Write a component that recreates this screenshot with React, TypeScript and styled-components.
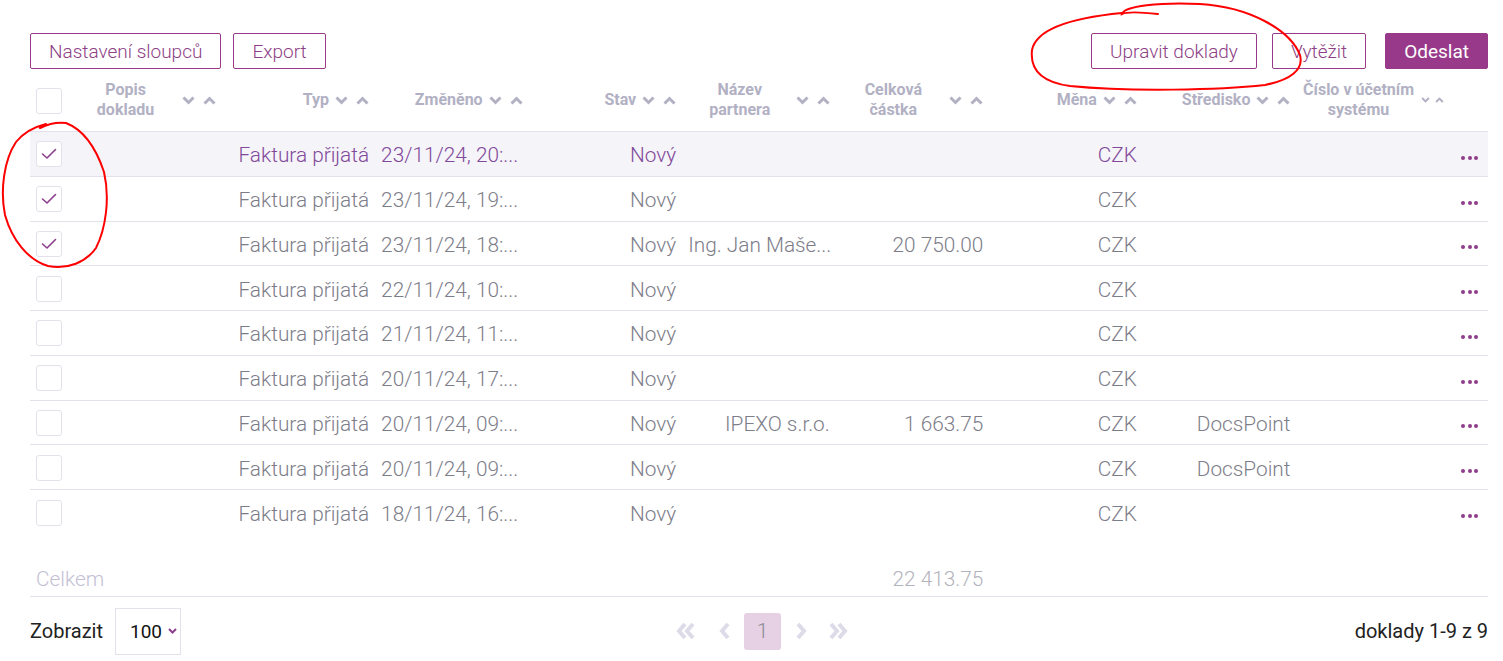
import React from 'react'
import styled, { createGlobalStyle } from 'styled-components'

const PURPLE = '#983a89'
const LINE = '#e3e1eb'
const HEAD = '#b2b1c4'

const GlobalStyle = createGlobalStyle`
  html, body {
    margin: 0;
    padding: 0;
    background: #fff;
  }
  body {
    font-family: Roboto, 'Liberation Sans', sans-serif;
  }
`

const Page = styled.div`
  position: relative;
  width: 1503px;
  height: 661px;
  box-sizing: border-box;
  padding: 33px 15px 0 30px;
  overflow: hidden;
`

const Toolbar = styled.div`
  display: flex;
  align-items: center;
  height: 36px;
`

const ButtonGroup = styled.div<{ $gap: number }>`
  display: flex;
  gap: ${(p) => p.$gap}px;
`

const Spacer = styled.div`
  flex: 1;
`

const Button = styled.button<{ $primary?: boolean }>`
  height: 36px;
  box-sizing: border-box;
  padding: 0 18px;
  border: 1px solid ${PURPLE};
  border-radius: 2px;
  background: ${(p) => (p.$primary ? PURPLE : '#fff')};
  color: ${(p) => (p.$primary ? '#fff' : '#8d4085')};
  font-family: Roboto, sans-serif;
  font-size: 19px;
  font-weight: ${(p) => (p.$primary ? 400 : 300)};
  cursor: pointer;
`

const GRID = '34px repeat(9, minmax(0, 1fr)) 42px'

const HeaderRow = styled.div`
  display: grid;
  grid-template-columns: ${GRID};
  height: 63px;
  box-sizing: border-box;
  align-items: center;
  border-bottom: 1px solid ${LINE};
`

const HeadCell = styled.div`
  display: flex;
  align-items: center;
  justify-content: flex-end;
  padding: 0 2px 0 10px;
  min-width: 0;
  color: ${HEAD};
  font-size: 16px;
  font-weight: 700;
  line-height: 20px;
`

const HeadLabel = styled.span<{ $wide?: boolean }>`
  min-width: ${(p) => (p.$wide ? '100px' : '0')};
  flex-shrink: 0;
  text-align: center;
  white-space: nowrap;
`

const SortIcons = styled.span<{ $small?: boolean }>`
  display: flex;
  align-items: center;
  gap: ${(p) => (p.$small ? 5 : 8)}px;
  margin-left: ${(p) => (p.$small ? 7 : 6)}px;

  svg {
    width: ${(p) => (p.$small ? 9 : 13)}px;
    height: ${(p) => (p.$small ? 6 : 9)}px;
  }
`

const Row = styled.div<{ $selected?: boolean; $last?: boolean }>`
  display: grid;
  grid-template-columns: ${GRID};
  height: 44.75px;
  box-sizing: border-box;
  align-items: center;
  background: ${(p) => (p.$selected ? '#f4f4f9' : '#fff')};
  border-bottom: ${(p) => (p.$last ? 'none' : `1px solid ${LINE}`)};
  color: ${(p) => (p.$selected ? '#82489a' : '#7d7d89')};
`

const Cell = styled.div<{ $left?: boolean }>`
  padding: 3px 2px 0 10px;
  min-width: 0;
  font-size: 20.8px;
  font-weight: 300;
  line-height: 24px;
  white-space: nowrap;
  overflow: hidden;
  text-align: ${(p) => (p.$left ? 'left' : 'right')};
`

const CheckCell = styled.div`
  display: flex;
  align-items: center;
  padding: 1px 0 0 6px;
`

const Box = styled.span`
  display: flex;
  align-items: center;
  justify-content: center;
  width: 26px;
  height: 26px;
  box-sizing: border-box;
  border: 1px solid ${LINE};
  border-radius: 3px;
  background: #fff;
`

const ActionCell = styled.div`
  display: flex;
  justify-content: flex-end;
  gap: 2.5px;
  padding: 8px 10px 0 0;
`

const Dot = styled.span`
  width: 4px;
  height: 4px;
  border-radius: 50%;
  background: #8f3c8a;
`

const TotalRow = styled.div`
  display: grid;
  grid-template-columns: ${GRID};
  height: 62px;
  box-sizing: border-box;
  align-items: end;
  padding-bottom: 6px;
  border-bottom: 1px solid ${LINE};
  font-size: 20.8px;
  font-weight: 300;
  line-height: 22px;
`

const TotalLabel = styled.div`
  grid-column: 1 / span 3;
  padding-left: 6px;
  color: #c4c0d4;
`

const TotalAmount = styled.div`
  grid-column: 7;
  padding-right: 2px;
  text-align: right;
  color: #b3b3bd;
`

const Footer = styled.div`
  display: grid;
  grid-template-columns: 1fr auto 1fr;
  align-items: center;
  padding-top: 11px;
  font-size: 20px;
  color: #222;
`

const ShowBox = styled.div`
  display: flex;
  align-items: center;
  gap: 12px;
`

const Select = styled.div`
  display: flex;
  align-items: center;
  gap: 6px;
  width: 66px;
  height: 47px;
  box-sizing: border-box;
  padding-left: 14px;
  border: 1px solid ${LINE};
  font-size: 19px;
  color: #111;
`

const Pager = styled.div`
  display: flex;
  align-items: center;
  gap: 1px;
  margin-left: 7px;
`

const PageNav = styled.span`
  display: flex;
  align-items: center;
  justify-content: center;
  width: 37px;
  height: 37px;
`

const PageCurrent = styled.span`
  display: flex;
  align-items: center;
  justify-content: center;
  width: 37px;
  height: 37px;
  border-radius: 3px;
  background: #e6d0e4;
  color: #8c8c98;
  font-size: 21px;
  font-weight: 300;
`

const Count = styled.div`
  text-align: right;
`

const Scribble = styled.svg`
  position: absolute;
  top: 0;
  left: 0;
  pointer-events: none;
`

const Down = () => (
  <svg viewBox="0 0 13 9" fill="none">
    <path d="M1.5 1.5 L6.5 6.5 L11.5 1.5" stroke="currentColor" strokeWidth="3" />
  </svg>
)

const Up = () => (
  <svg viewBox="0 0 13 9" fill="none">
    <path d="M1.5 7.5 L6.5 2.5 L11.5 7.5" stroke="currentColor" strokeWidth="3" />
  </svg>
)

const Check = () => (
  <svg width="16" height="12" viewBox="0 0 16 12" fill="none">
    <path d="M1.5 6 L6 10 L14.5 1.5" stroke="#8b3f8c" strokeWidth="1.6" strokeLinecap="round" strokeLinejoin="round" />
  </svg>
)

const Chevron = ({ dir, double }: { dir: 'l' | 'r'; double?: boolean }) => {
  const one = dir === 'l' ? 'M9 2 L3 9 L9 16' : 'M3 2 L9 9 L3 16'
  const two = dir === 'l' ? 'M17 2 L11 9 L17 16' : 'M11 2 L17 9 L11 16'
  return (
    <svg width={double ? 21 : 12} height="18" viewBox={double ? '0 0 21 18' : '0 0 12 18'} fill="none">
      <path d={one} stroke="#dedbe9" strokeWidth="4" />
      {double && <path d={two} stroke="#dedbe9" strokeWidth="4" />}
    </svg>
  )
}

type Column = { label: React.ReactNode; wide?: boolean; small?: boolean }

const columns: Column[] = [
  { label: <>Popis<br />dokladu</>, wide: true },
  { label: 'Typ' },
  { label: 'Změněno' },
  { label: 'Stav' },
  { label: <>Název<br />partnera</>, wide: true },
  { label: <>Celková<br />částka</>, wide: true },
  { label: 'Měna' },
  { label: 'Středisko' },
  { label: <>Číslo v účetním<br />systému</>, wide: true, small: true },
]

type Doc = {
  date: string
  partner?: string
  amount?: string
  centre?: string
  selected?: boolean
}

const docs: Doc[] = [
  { date: '23/11/24, 20:...', selected: true },
  { date: '23/11/24, 19:...', selected: true },
  { date: '23/11/24, 18:...', selected: true, partner: 'Ing. Jan Maše...', amount: '20 750.00' },
  { date: '22/11/24, 10:...' },
  { date: '21/11/24, 11:...' },
  { date: '20/11/24, 17:...' },
  { date: '20/11/24, 09:...', partner: 'IPEXO s.r.o.', amount: '1 663.75', centre: 'DocsPoint' },
  { date: '20/11/24, 09:...', centre: 'DocsPoint' },
  { date: '18/11/24, 16:...' },
]

export default function App() {
  return (
    <Page>
      <GlobalStyle />
      <Toolbar>
        <ButtonGroup $gap={12}>
          <Button>Nastavení sloupců</Button>
          <Button>Export</Button>
        </ButtonGroup>
        <Spacer />
        <ButtonGroup $gap={15}>
          <Button>Upravit doklady</Button>
          <Button>Vytěžit</Button>
        </ButtonGroup>
        <Button $primary style={{ marginLeft: 19 }}>Odeslat</Button>
      </Toolbar>

      <HeaderRow>
        <CheckCell>
          <Box />
        </CheckCell>
        {columns.map((c, i) => (
          <HeadCell key={i}>
            <HeadLabel $wide={c.wide}>{c.label}</HeadLabel>
            <SortIcons $small={c.small}>
              <Down />
              <Up />
            </SortIcons>
          </HeadCell>
        ))}
        <div />
      </HeaderRow>

      {docs.map((d, i) => (
        <Row key={i} $selected={i === 0} $last={i === docs.length - 1}>
          <CheckCell>
            <Box>{d.selected && <Check />}</Box>
          </CheckCell>
          <Cell />
          <Cell>Faktura přijatá</Cell>
          <Cell $left>{d.date}</Cell>
          <Cell>Nový</Cell>
          <Cell>{d.partner}</Cell>
          <Cell>{d.amount}</Cell>
          <Cell>CZK</Cell>
          <Cell>{d.centre}</Cell>
          <Cell />
          <ActionCell>
            <Dot />
            <Dot />
            <Dot />
          </ActionCell>
        </Row>
      ))}

      <TotalRow>
        <TotalLabel>Celkem</TotalLabel>
        <TotalAmount>22 413.75</TotalAmount>
      </TotalRow>

      <Footer>
        <ShowBox>
          Zobrazit
          <Select>
            100
            <svg width="9" height="6" viewBox="0 0 9 6" fill="none">
              <path d="M1 1 L4.5 4.5 L8 1" stroke="#8b3f8c" strokeWidth="2" />
            </svg>
          </Select>
        </ShowBox>
        <Pager>
          <PageNav><Chevron dir="l" double /></PageNav>
          <PageNav><Chevron dir="l" /></PageNav>
          <PageCurrent>1</PageCurrent>
          <PageNav><Chevron dir="r" /></PageNav>
          <PageNav><Chevron dir="r" double /></PageNav>
        </Pager>
        <Count>doklady 1-9 z 9</Count>
      </Footer>

      <Scribble width="1503" height="661" viewBox="0 0 1503 661" fill="none">
        <path
          d="M1158 14 C1140 12 1126 12 1122 14 C1124 6 1160 2 1200 4 C1250 7 1290 30 1300 55 C1304 70 1290 80 1265 85 C1220 90 1130 92 1070 86 C1040 82 1030 68 1032 50 C1036 30 1070 18 1122 13"
          stroke="#f00"
          strokeWidth="2"
          strokeLinecap="round"
        />
        <path
          d="M40 128 C48 124 58 122 66 123 C84 130 96 148 104 172 C110 198 106 228 96 248 C86 262 68 270 48 266 C28 260 12 240 5 215 C0 190 4 160 16 142 C24 132 34 127 46 124"
          stroke="#f00"
          strokeWidth="2"
          strokeLinecap="round"
        />
      </Scribble>
    </Page>
  )
}
